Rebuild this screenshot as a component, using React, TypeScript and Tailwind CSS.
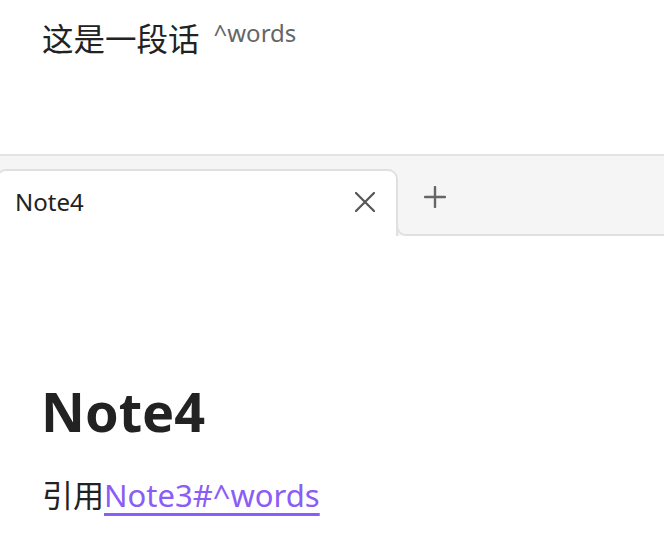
import React from "react";

const font = { fontFamily: '"Noto Sans", "Noto Sans CJK SC", sans-serif' };

export default function App() {
  return (
    <div className="w-[664px] h-[535px] bg-white overflow-hidden text-[#222]" style={font}>
      <div className="h-[154px] pl-[42px] pt-[15px]">
        <p className="text-[31.5px] leading-[1.5]">
          这是一段话
          <span className="ml-[14px] text-[24px] text-[#666] align-[9px]">^words</span>
        </p>
      </div>
      <div className="h-[82px] border-t-2 border-[#e3e3e3] bg-[#f5f5f5] flex">
        <div className="-ml-[4px] w-[402px] mt-[13px] bg-white border-t-2 border-x-2 border-[#e0e0e0] rounded-t-[10px] flex items-center justify-between pl-[17px] pr-[21px] pb-[3px] relative z-10">
          <span className="text-[24px] leading-none">Note4</span>
          <svg width="20" height="20" viewBox="0 0 20 20" className="text-[#555]">
            <path d="M1 1L19 19M19 1L1 19" stroke="currentColor" strokeWidth="2.2" strokeLinecap="round" />
          </svg>
        </div>
        <div className="flex-1 -ml-[2px] mt-[23px] border-l-2 border-b-2 border-[#e0e0e0] rounded-bl-[10px] pl-[26px] pt-[7px]">
          <svg width="22" height="22" viewBox="0 0 22 22" className="text-[#666]">
            <path d="M11 1V21M1 11H21" stroke="currentColor" strokeWidth="2.4" strokeLinecap="round" />
          </svg>
        </div>
      </div>
      <div className="pl-[42px] pt-[143px]">
        <h1 className="text-[54px] font-bold leading-[1.2] -ml-[1px]">Note4</h1>
        <p className="mt-[28px] text-[31px] leading-[1.5]">
          引用
          <a className="text-[#8b5cf6] underline decoration-[2.5px] underline-offset-[6px]">Note3#^words</a>
        </p>
      </div>
    </div>
  );
}
